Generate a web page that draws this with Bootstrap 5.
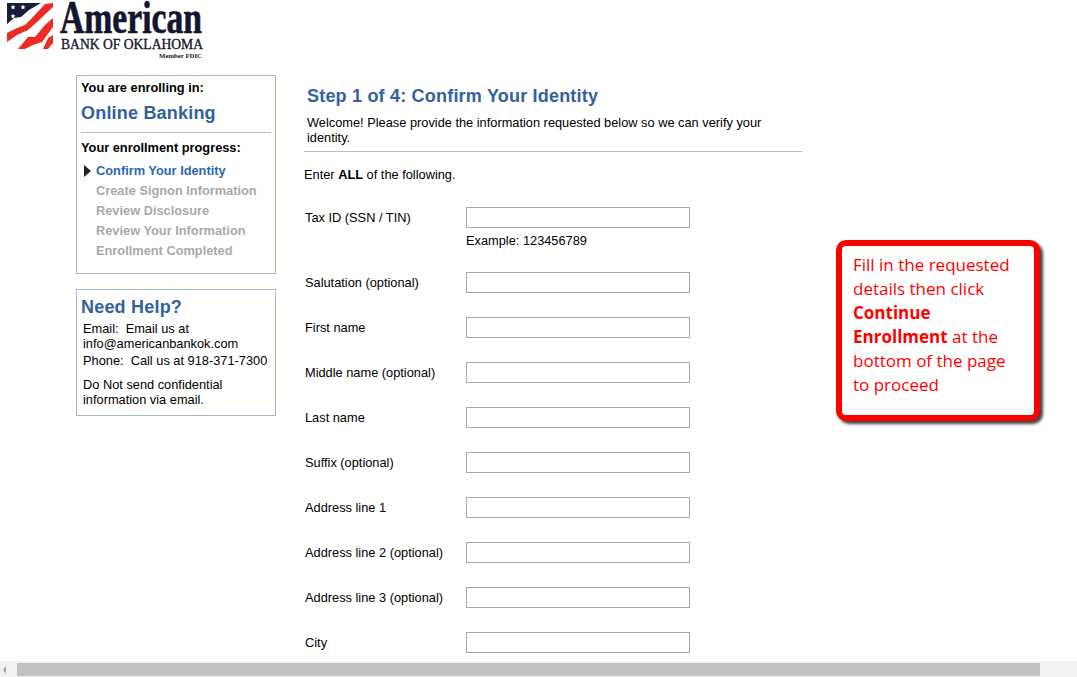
<!DOCTYPE html>
<html lang="en">
<head>
  <meta charset="UTF-8" />
  <meta name="viewport" content="width=device-width, initial-scale=1" />
  <title>Enrollment - American Bank of Oklahoma</title>
  <link href="https://cdn.jsdelivr.net/npm/bootstrap@5.3.3/dist/css/bootstrap.min.css" rel="stylesheet" />
  <style>
    html, body { height: 100%; overflow: hidden; }
    body { font-family: "Liberation Sans", Arial, sans-serif; font-size: 12.8px; line-height: 15px; color: #000; background: #fff; }
    .logo { display: block; width: 210px; height: 62px; }
    .page { padding-left: 76px; margin-top: 13px; }
    .side { width: 200px; flex: none; }
    .side-box { border: 1px solid #a4b8d0; padding: 4px 4px 0 4px; }
    .enroll { height: 199px; margin-bottom: 15px; }
    .help { height: 127px; padding-top: 6px; }
    .side-title { font-weight: 700; font-size: 12.8px; line-height: 15px; margin: 0; }
    .blue-head { color: #33619e; font-weight: 700; font-size: 18px; line-height: 22px; margin: 0; letter-spacing: .2px; }
    .enroll .blue-head { margin-top: 7px; }
    .help .blue-head { margin-bottom: 3px; }
    .side-rule { border-top: 1px solid #b4bcc8; margin: 8px 0 7px 0; opacity: 1; }
    .steps { list-style: none; margin: 6px 0 0 0; padding: 0 0 0 15px; }
    .steps li { font-weight: 700; height: 20px; line-height: 20px; color: #a9a9a9; position: relative; }
    .steps li.now { color: #2e67b2; }
    .steps li.now::before { content: ""; position: absolute; left: -12px; top: 4px; border-left: 7px solid #222; border-top: 6px solid transparent; border-bottom: 6px solid transparent; }
    .help p { margin: 0 0 0 2px; }
    .help .phone { margin-top: 2px; }
    .help .note { margin-top: 9px; }
    .main { width: 498px; margin-left: 28px; padding-top: 10px; }
    .step-text { padding-left: 3px; }
    .step-text p { margin: 8px 0 0 0; }
    .main-rule { border-top: 1px solid #bbb; margin: 6px 0 0 0; opacity: 1; }
    .enter { margin: 15px 0 25px 0; }
    .field { margin-bottom: 24px; padding-left: 1px; }
    .field label { width: 161px; flex: none; line-height: 21px; margin: 0; }
    .field input { width: 224px; height: 21px; border: 1px solid #a9a9a9; border-radius: 0; padding: 1px 2px; font-size: 12.8px; box-shadow: none; }
    .example { margin-top: 5px; }
    .callout { position: absolute; left: 836px; top: 240px; width: 204px; height: 181px; border: 6px solid #f00; border-radius: 10px; padding: 7px 11px; background: #fff; color: #f00; font-family: "Open Sans", sans-serif; font-size: 17px; line-height: 24px; box-shadow: 3px 3px 3px #444; }
    .hbar { position: fixed; left: 0; right: 0; bottom: 0; height: 16px; background: #f1f1f1; }
    .hbar .thumb { position: absolute; left: 17px; top: 2px; width: 1023px; height: 13px; background: #c1c1c1; }
    .hbar .arrow { position: absolute; left: 3px; top: 5px; border-right: 3px solid #a3a3a3; border-top: 4px solid transparent; border-bottom: 4px solid transparent; }
  </style>
</head>
<body>
  <svg class="logo" viewBox="0 0 210 62">
    <path fill="#1a1c3c" d="M7 3H41L29 10 21 17 14 18 7 24Z"/>
    <path fill="#ee2a24" d="M53 3 45 4 33 17 25 25 17 28 7 33 7 42 17 35 28 30 37 22 53 7Z"/>
    <path fill="#ee2a24" d="M53 18 45 25 35 37 28 37 18 49 25 49 33 45 42 42 53 27Z"/>
    <path fill="#ee2a24" d="M53 35 48 38 43 49 48 49 53 43Z"/>
    <g fill="#fff">
      <path d="M13 4.5 13.7 6.3 15.5 6.5 14.1 7.7 14.6 9.5 13 8.5 11.4 9.5 11.9 7.7 10.5 6.5 12.3 6.3Z"/>
      <path d="M23 4.5 23.7 6.3 25.5 6.5 24.1 7.7 24.6 9.5 23 8.5 21.4 9.5 21.9 7.7 20.5 6.5 22.3 6.3Z"/>
      <path d="M13 13.5 13.7 15.3 15.5 15.5 14.1 16.7 14.6 18.5 13 17.5 11.4 18.5 11.9 16.7 10.5 15.5 12.3 15.3Z"/>
    </g>
    <text x="60" y="33" font-family="Liberation Serif, serif" font-weight="700" font-size="46" fill="#14152e" stroke="#14152e" stroke-width=".7" textLength="142" lengthAdjust="spacingAndGlyphs">American</text>
    <text x="61" y="49" font-family="Liberation Serif, serif" font-size="15.5" fill="#14152e" stroke="#14152e" stroke-width=".35" textLength="142" lengthAdjust="spacingAndGlyphs">BANK OF OKLAHOMA</text>
    <text x="159" y="58" font-family="Liberation Serif, serif" font-weight="700" font-size="6" fill="#14152e" textLength="43" lengthAdjust="spacingAndGlyphs">Member FDIC</text>
  </svg>

  <div class="page d-flex align-items-start">
    <div class="side">
      <div class="side-box enroll">
        <p class="side-title">You are enrolling in:</p>
        <h2 class="blue-head">Online Banking</h2>
        <hr class="side-rule" />
        <p class="side-title">Your enrollment progress:</p>
        <ul class="steps">
          <li class="now">Confirm Your Identity</li>
          <li>Create Signon Information</li>
          <li>Review Disclosure</li>
          <li>Review Your Information</li>
          <li>Enrollment Completed</li>
        </ul>
      </div>
      <div class="side-box help">
        <h2 class="blue-head">Need Help?</h2>
        <p>Email:&nbsp; Email us at info@americanbankok.com</p>
        <p class="phone">Phone:&nbsp; Call us at 918-371-7300</p>
        <p class="note">Do Not send confidential information via email.</p>
      </div>
    </div>

    <div class="main">
      <div class="step-text">
        <h1 class="blue-head">Step 1 of 4: Confirm Your Identity</h1>
        <p>Welcome! Please provide the information requested below so we can verify your identity.</p>
      </div>
      <hr class="main-rule" />
      <p class="enter">Enter <b>ALL</b> of the following.</p>
      <form>
        <div class="field d-flex">
          <label for="taxId">Tax ID (SSN / TIN)</label>
          <div>
            <input class="form-control" id="taxId" type="text" />
            <div class="example">Example: 123456789</div>
          </div>
        </div>
        <div class="field d-flex"><label for="salutation">Salutation (optional)</label><input class="form-control" id="salutation" type="text" /></div>
        <div class="field d-flex"><label for="first">First name</label><input class="form-control" id="first" type="text" /></div>
        <div class="field d-flex"><label for="middle">Middle name (optional)</label><input class="form-control" id="middle" type="text" /></div>
        <div class="field d-flex"><label for="last">Last name</label><input class="form-control" id="last" type="text" /></div>
        <div class="field d-flex"><label for="suffix">Suffix (optional)</label><input class="form-control" id="suffix" type="text" /></div>
        <div class="field d-flex"><label for="addr1">Address line 1</label><input class="form-control" id="addr1" type="text" /></div>
        <div class="field d-flex"><label for="addr2">Address line 2 (optional)</label><input class="form-control" id="addr2" type="text" /></div>
        <div class="field d-flex"><label for="addr3">Address line 3 (optional)</label><input class="form-control" id="addr3" type="text" /></div>
        <div class="field d-flex"><label for="city">City</label><input class="form-control" id="city" type="text" /></div>
      </form>
    </div>
  </div>

  <div class="callout">Fill in the requested details then click <b>Continue Enrollment</b> at the bottom of the page to proceed</div>

  <div class="hbar"><span class="arrow"></span><div class="thumb"></div></div>

  <script src="https://cdn.jsdelivr.net/npm/bootstrap@5.3.3/dist/js/bootstrap.bundle.min.js"></script>
</body>
</html>
